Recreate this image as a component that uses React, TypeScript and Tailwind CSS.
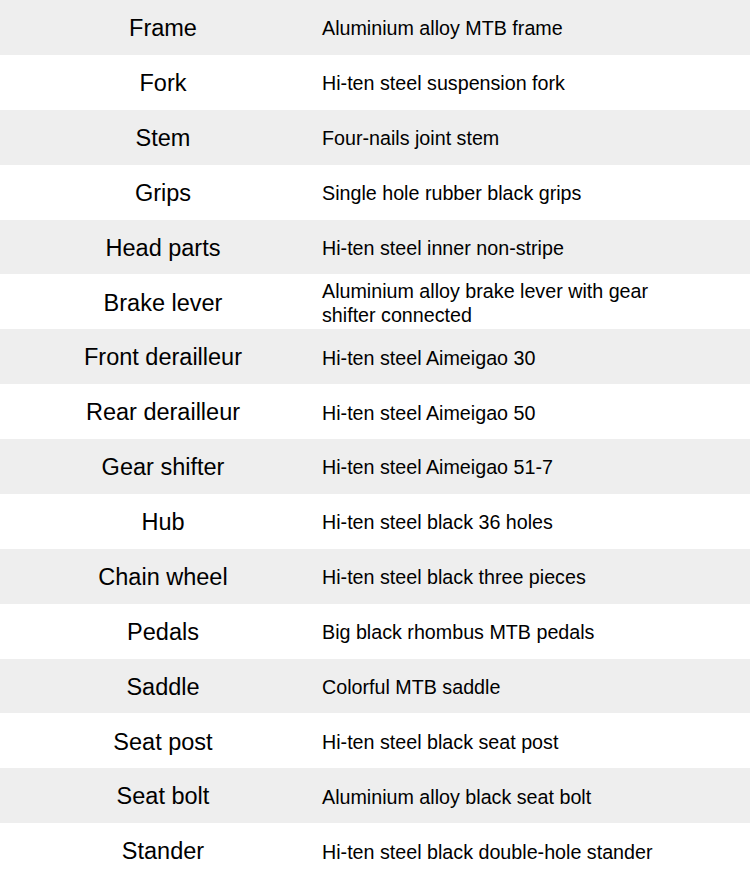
const specs: [string, string][] = [
  ['Frame', 'Aluminium alloy MTB frame'],
  ['Fork', 'Hi-ten steel suspension fork'],
  ['Stem', 'Four-nails joint stem'],
  ['Grips', 'Single hole rubber black grips'],
  ['Head parts', 'Hi-ten steel inner non-stripe'],
  ['Brake lever', 'Aluminium alloy brake lever with gear shifter connected'],
  ['Front derailleur', 'Hi-ten steel Aimeigao 30'],
  ['Rear derailleur', 'Hi-ten steel Aimeigao 50'],
  ['Gear shifter', 'Hi-ten steel Aimeigao 51-7'],
  ['Hub', 'Hi-ten steel black 36 holes'],
  ['Chain wheel', 'Hi-ten steel black three pieces'],
  ['Pedals', 'Big black rhombus MTB pedals'],
  ['Saddle', 'Colorful MTB saddle'],
  ['Seat post', 'Hi-ten steel black seat post'],
  ['Seat bolt', 'Aluminium alloy black seat bolt'],
  ['Stander', 'Hi-ten steel black double-hole stander'],
];

export default function App() {
  return (
    <div className="flex h-[878px] w-[750px] flex-col bg-white font-['Liberation_Sans',Arial,sans-serif] text-black">
      {specs.map(([part, desc], i) => (
        <div
          key={part}
          className={`flex flex-1 items-center ${i % 2 === 0 ? 'bg-[#eeeeee]' : 'bg-white'}`}
        >
          <div className="w-[322px] pl-[4px] pt-[3px] text-center text-[23.5px] leading-none">{part}</div>
          <div className="w-[345px] pt-[2px] text-[19.7px] leading-[24px]">{desc}</div>
        </div>
      ))}
    </div>
  );
}
